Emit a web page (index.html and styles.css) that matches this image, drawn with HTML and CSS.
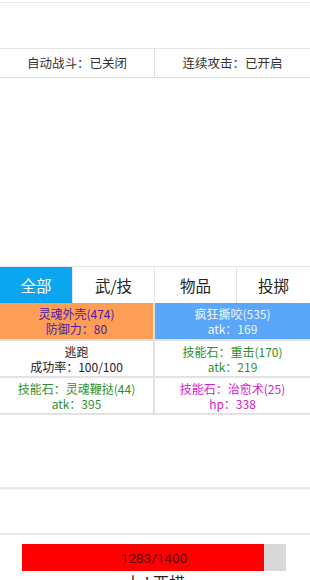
FILE: index.html
```html
<!DOCTYPE html>
<html>
<head>
<meta charset="utf-8">
<link rel="stylesheet" href="styles.css">
</head>
<body>
<div class="page">
  <div class="top-gap"></div>
  <div class="blank-a"></div>
  <div class="status">
    <div class="status-cell">自动战斗：已关闭</div>
    <div class="status-cell">连续攻击：已开启</div>
  </div>
  <div class="blank-b"></div>
  <div class="tabs">
    <div class="tab active">全部</div>
    <div class="tab">武/技</div>
    <div class="tab">物品</div>
    <div class="tab">投掷</div>
  </div>
  <div class="cards">
    <div class="card orange"><div>灵魂外壳(474)</div><div>防御力：80</div></div>
    <div class="card blue"><div>疯狂撕咬(535)</div><div>atk：169</div></div>
    <div class="card plain"><div>逃跑</div><div>成功率：100/100</div></div>
    <div class="card green"><div>技能石：重击(170)</div><div>atk：219</div></div>
    <div class="card green"><div>技能石：灵魂鞭挞(44)</div><div>atk：395</div></div>
    <div class="card magenta"><div>技能石：治愈术(25)</div><div>hp：338</div></div>
  </div>
  <div class="blank-c"></div>
  <div class="blank-d"></div>
  <div class="bar-wrap">
    <div class="bar">
      <div class="bar-fill" style="width:91.6%"></div>
      <div class="bar-text">1283/1400</div>
    </div>
  </div>
  <div class="footer-text">大 I 西横</div>
</div>
</body>
</html>
```
FILE: styles.css
```css
* { box-sizing: border-box; }
html, body { margin: 0; padding: 0; background: #fff; }
body {
  width: 310px;
  height: 580px;
  overflow: hidden;
  font-family: "Noto Sans CJK SC", "Noto Sans", sans-serif;
  color: #222;
}
.top-gap { height: 2px; }
.blank-a { height: 46px; border-top: 1px solid #ececec; }
.status {
  display: grid;
  grid-template-columns: 154px 1fr;
  height: 30px;
  border-top: 1px solid #e4e4e4;
  border-bottom: 1px solid #e0e0e0;
}
.status-cell {
  display: flex;
  align-items: center;
  justify-content: center;
  font-size: 12.5px;
  color: #333;
  padding-bottom: 1px;
}
.status-cell + .status-cell { border-left: 1px solid #e0e0e0; }
.blank-b { height: 188px; }
.tabs {
  display: grid;
  grid-template-columns: 72px 82px 82px 1fr;
  height: 37px;
  border-top: 1px solid #e4e4e4;
}
.tab {
  display: flex;
  align-items: center;
  justify-content: center;
  font-size: 15.5px;
  color: #222;
}
.tab + .tab { border-left: 1px solid #e4e4e4; }
.tab.active { background: #0ba6ef; color: #fff; }
.cards {
  display: grid;
  grid-template-columns: 153px 1fr;
  grid-template-rows: 36px 35px 35px;
  gap: 2px;
  background: #e2e2e2;
  border-bottom: 2px solid #e2e2e2;
}
.card {
  display: flex;
  flex-direction: column;
  align-items: center;
  justify-content: center;
  font-size: 12px;
  line-height: 15px;
  background: #fff;
}
.card.orange { background: #fe9d56; color: #4a1aa6; }
.card.blue { background: #5aa6f8; color: #f2f6ff; }
.card.plain { color: #222; }
.card.green { color: #2f8f2f; }
.card.magenta { color: #d21ccb; }
.blank-c { height: 74px; border-bottom: 2px solid #e8e8e8; }
.blank-d { height: 46px; border-bottom: 2px solid #e8e8e8; border-top: 1px solid #f3f3f3; }
.bar-wrap { padding: 9px 24px 0 22px; }
.bar {
  position: relative;
  height: 27px;
  background: #d9d9d9;
}
.bar-fill {
  height: 100%;
  background: #ff0000;
}
.bar-text {
  position: absolute;
  inset: 0;
  display: flex;
  align-items: center;
  justify-content: center;
  font-family: Roboto, "Noto Sans", sans-serif;
  font-size: 13.5px;
  color: #5a0a0a;
}
.footer-text {
  text-align: center;
  font-size: 16px;
  line-height: 20px;
  margin-top: 1px;
  color: #222;
}
```
